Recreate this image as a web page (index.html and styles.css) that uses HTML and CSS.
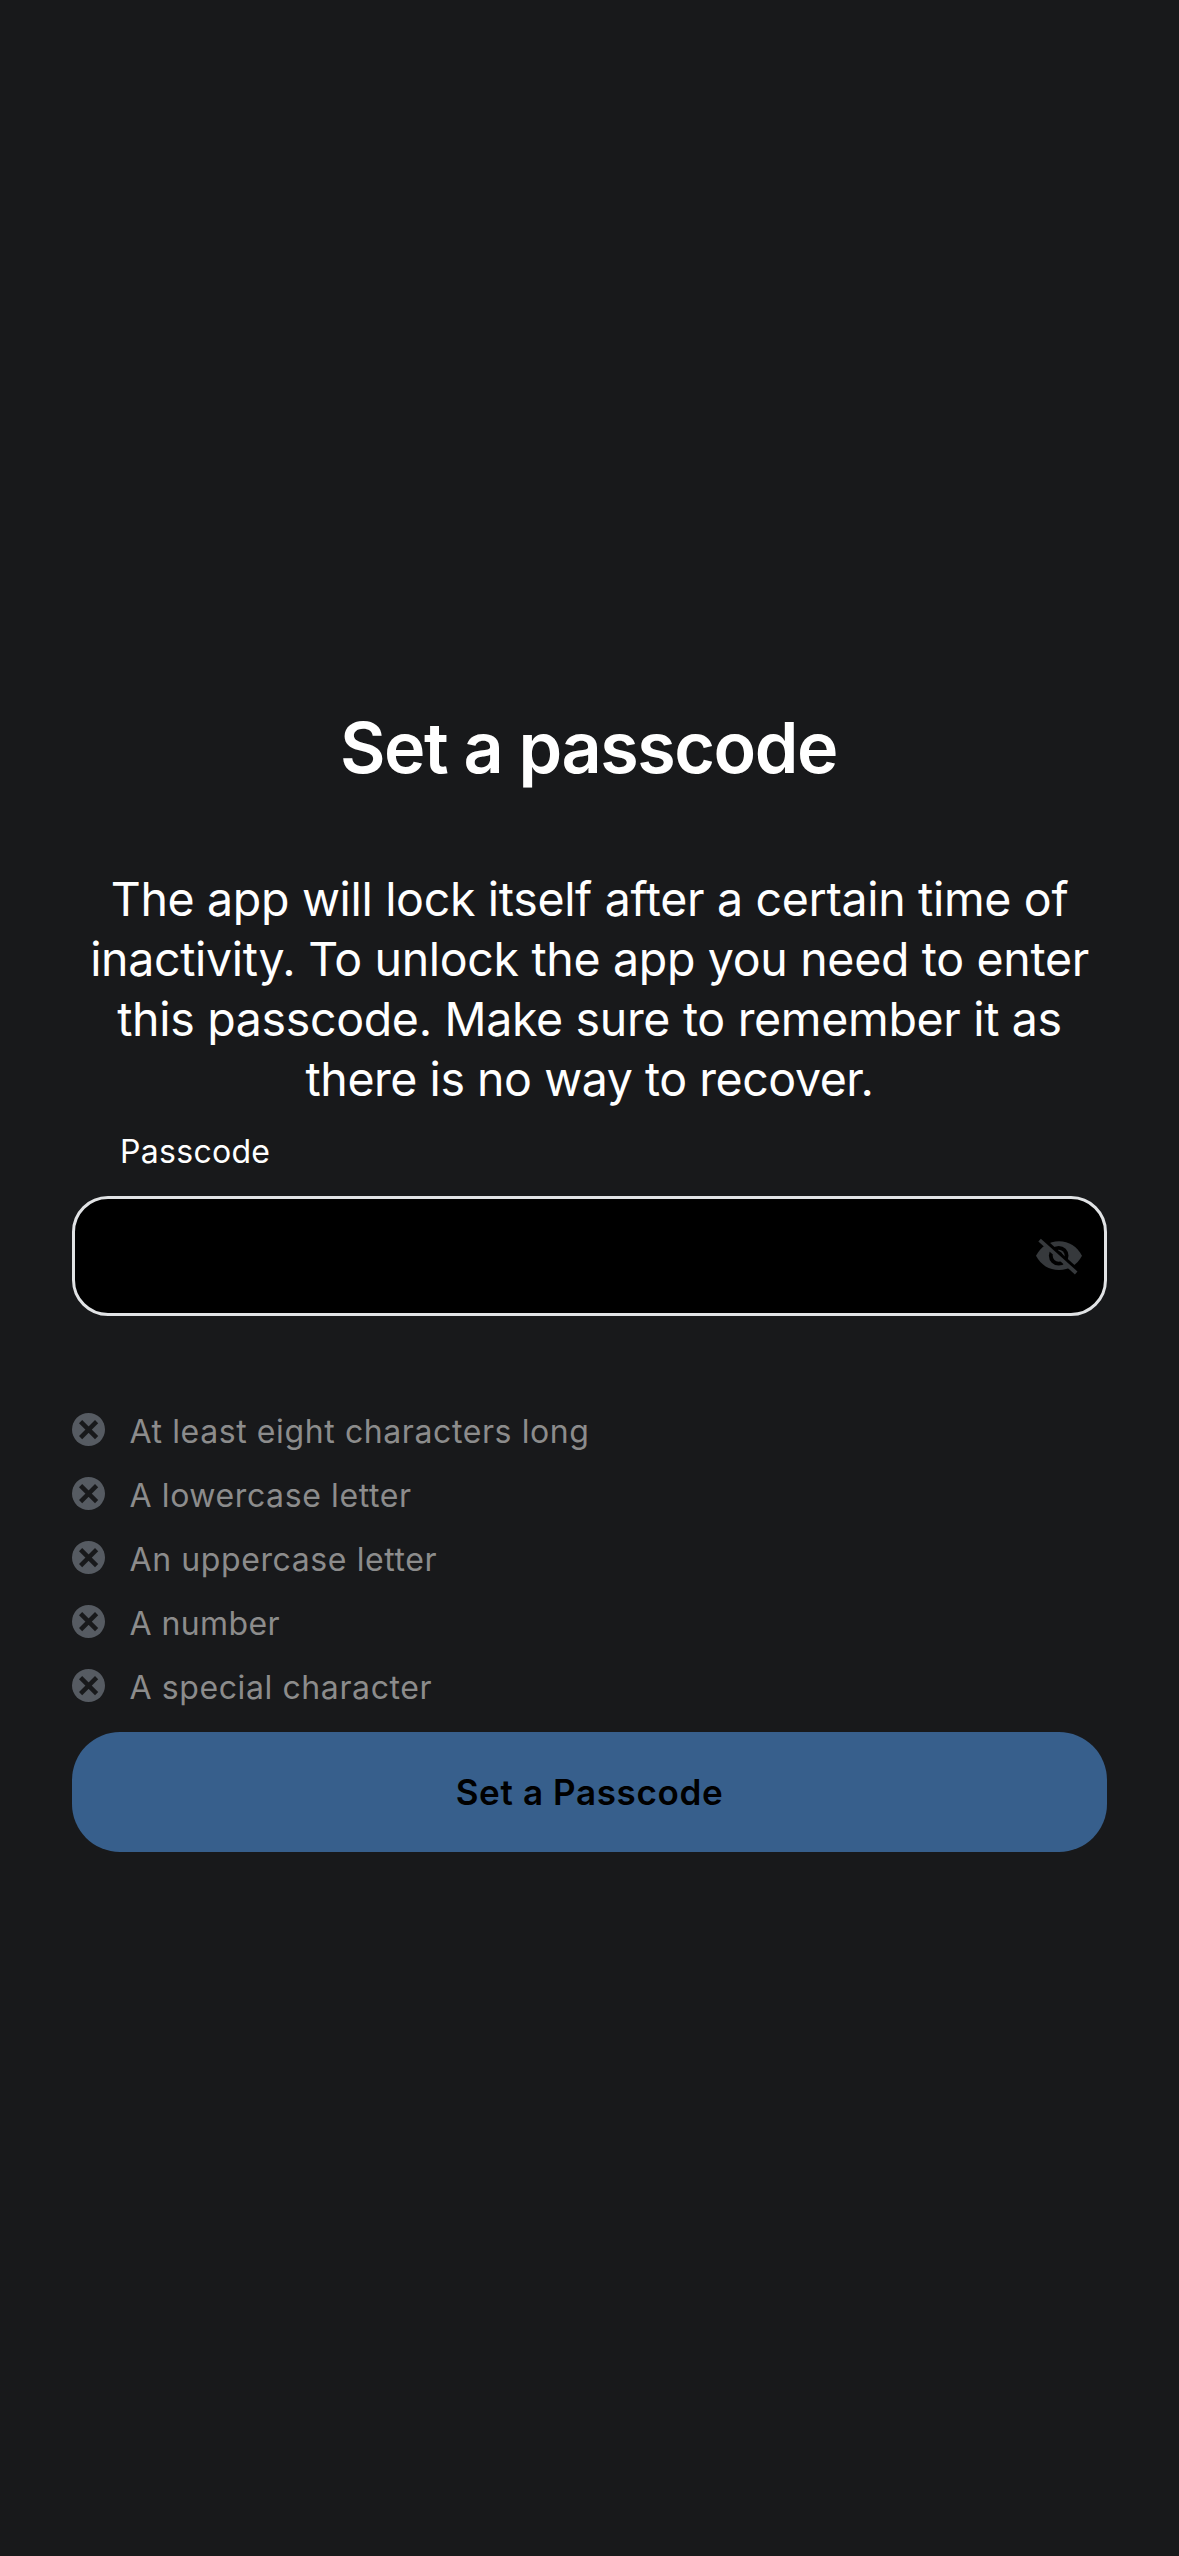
FILE: index.html
```html
<!DOCTYPE html>
<html lang="en">
<head>
<meta charset="utf-8">
<title>Set a passcode</title>
<link rel="stylesheet" href="styles.css">
</head>
<body>
<svg class="sprite" aria-hidden="true">
  <symbol id="cross" viewBox="0 0 33 33">
    <circle cx="16.5" cy="16.5" r="16.5" fill="currentColor"/>
    <path d="M8.6 8.6l16 16M24.6 8.6l-16 16" class="cross-stroke"/>
  </symbol>
</svg>
<main class="screen">
  <h1 class="title">Set a passcode</h1>
  <p class="intro">The app will lock itself after a certain time of<br>inactivity. To unlock the app you need to enter<br>this passcode. Make sure to remember it as<br><span class="intro-last">there is no way to recover.</span></p>
  <div class="label">Passcode</div>
  <div class="field">
    <svg class="eye" viewBox="0 0 48 48">
      <path class="eye-body" d="M1 23.7C6 14.5 14 9.2 24 9.2S42 14.500 47 23.700C42 33 34 38 24 38S6 33 1 23.700Z"/>
      <circle class="eye-gap" cx="23.700" cy="23.700" r="9.800"/>
      <circle class="eye-body" cx="23.700" cy="23.700" r="6"/>
      <path class="eye-glint" d="M23.500 20.200a3.400 3.400 0 0 1 3.600 3.600"/>
      <path class="eye-cut" d="M7 6L43.800 39.400"/>
      <path class="eye-slash" d="M4.600 8.200L41.200 41"/>
    </svg>
  </div>
  <ul class="rules">
    <li class="rule"><svg class="mark"><use href="#cross"/></svg><span class="rule-text">At least eight characters long</span></li>
    <li class="rule"><svg class="mark"><use href="#cross"/></svg><span class="rule-text">A lowercase letter</span></li>
    <li class="rule"><svg class="mark"><use href="#cross"/></svg><span class="rule-text">An uppercase letter</span></li>
    <li class="rule"><svg class="mark"><use href="#cross"/></svg><span class="rule-text rule-text--short">A number</span></li>
    <li class="rule"><svg class="mark"><use href="#cross"/></svg><span class="rule-text">A special character</span></li>
  </ul>
  <button class="submit" type="button">Set a Passcode</button>
</main>
</body>
</html>
```
FILE: styles.css
```css
* {
  box-sizing: border-box;
}

body {
  margin: 0;
  background: #18191b;
  color: #fff;
  font-family: Inter, "Liberation Sans", sans-serif;
}

.sprite {
  display: none;
}

.screen {
  display: flex;
  flex-direction: column;
  height: 2556px;
  padding: 705px 72px 0;
}

.title {
  margin: 0 2px 78px 0;
  font-size: 70px;
  font-weight: 600;
  line-height: 86px;
  letter-spacing: -1.43px;
  text-align: center;
}

.intro {
  margin: 0 0 23px;
  font-size: 46.5px;
  line-height: 60px;
  letter-spacing: -0.33px;
  text-align: center;
  white-space: nowrap;
}

.intro-last {
  letter-spacing: -0.46px;
}

.label {
  margin-bottom: 24px;
  padding-left: 48px;
  font-size: 32px;
  line-height: 40px;
  letter-spacing: 0.3px;
}

.field {
  display: flex;
  align-items: center;
  justify-content: flex-end;
  height: 120px;
  margin-bottom: 96px;
  padding-right: 21px;
  border: 3px solid #e1e3e5;
  border-radius: 36px;
  background: #000;
}

.eye {
  width: 48px;
  height: 48px;
}

.eye-body {
  fill: #36393c;
}

.eye-gap {
  fill: #000;
}

.eye-glint {
  fill: none;
  stroke: #000;
  stroke-width: 1.5;
}

.eye-cut {
  fill: none;
  stroke: #000;
  stroke-width: 3.6;
}

.eye-slash {
  fill: none;
  stroke: #36393c;
  stroke-width: 3.8;
}

.rules {
  display: flex;
  flex-direction: column;
  gap: 24px;
  margin: 0 0 24px;
  padding: 0;
  list-style: none;
}

.rule {
  display: flex;
  align-items: flex-start;
  gap: 24.5px;
  height: 40px;
  color: #8c8c8c;
}

.mark {
  width: 33px;
  height: 33px;
  margin-top: 1px;
  color: #565b62;
}

.cross-stroke {
  fill: none;
  stroke: #18191b;
  stroke-width: 4.5;
}

.rule-text {
  font-size: 32px;
  line-height: 40px;
  letter-spacing: 0.6px;
}

.rule-text--short {
  letter-spacing: 0.4px;
}

.submit {
  height: 120px;
  border: 0;
  border-radius: 48px;
  background: #375f8c;
  color: #000;
  font: 600 35px/42px Inter, "Liberation Sans", sans-serif;
  letter-spacing: 0.64px;
}
```
